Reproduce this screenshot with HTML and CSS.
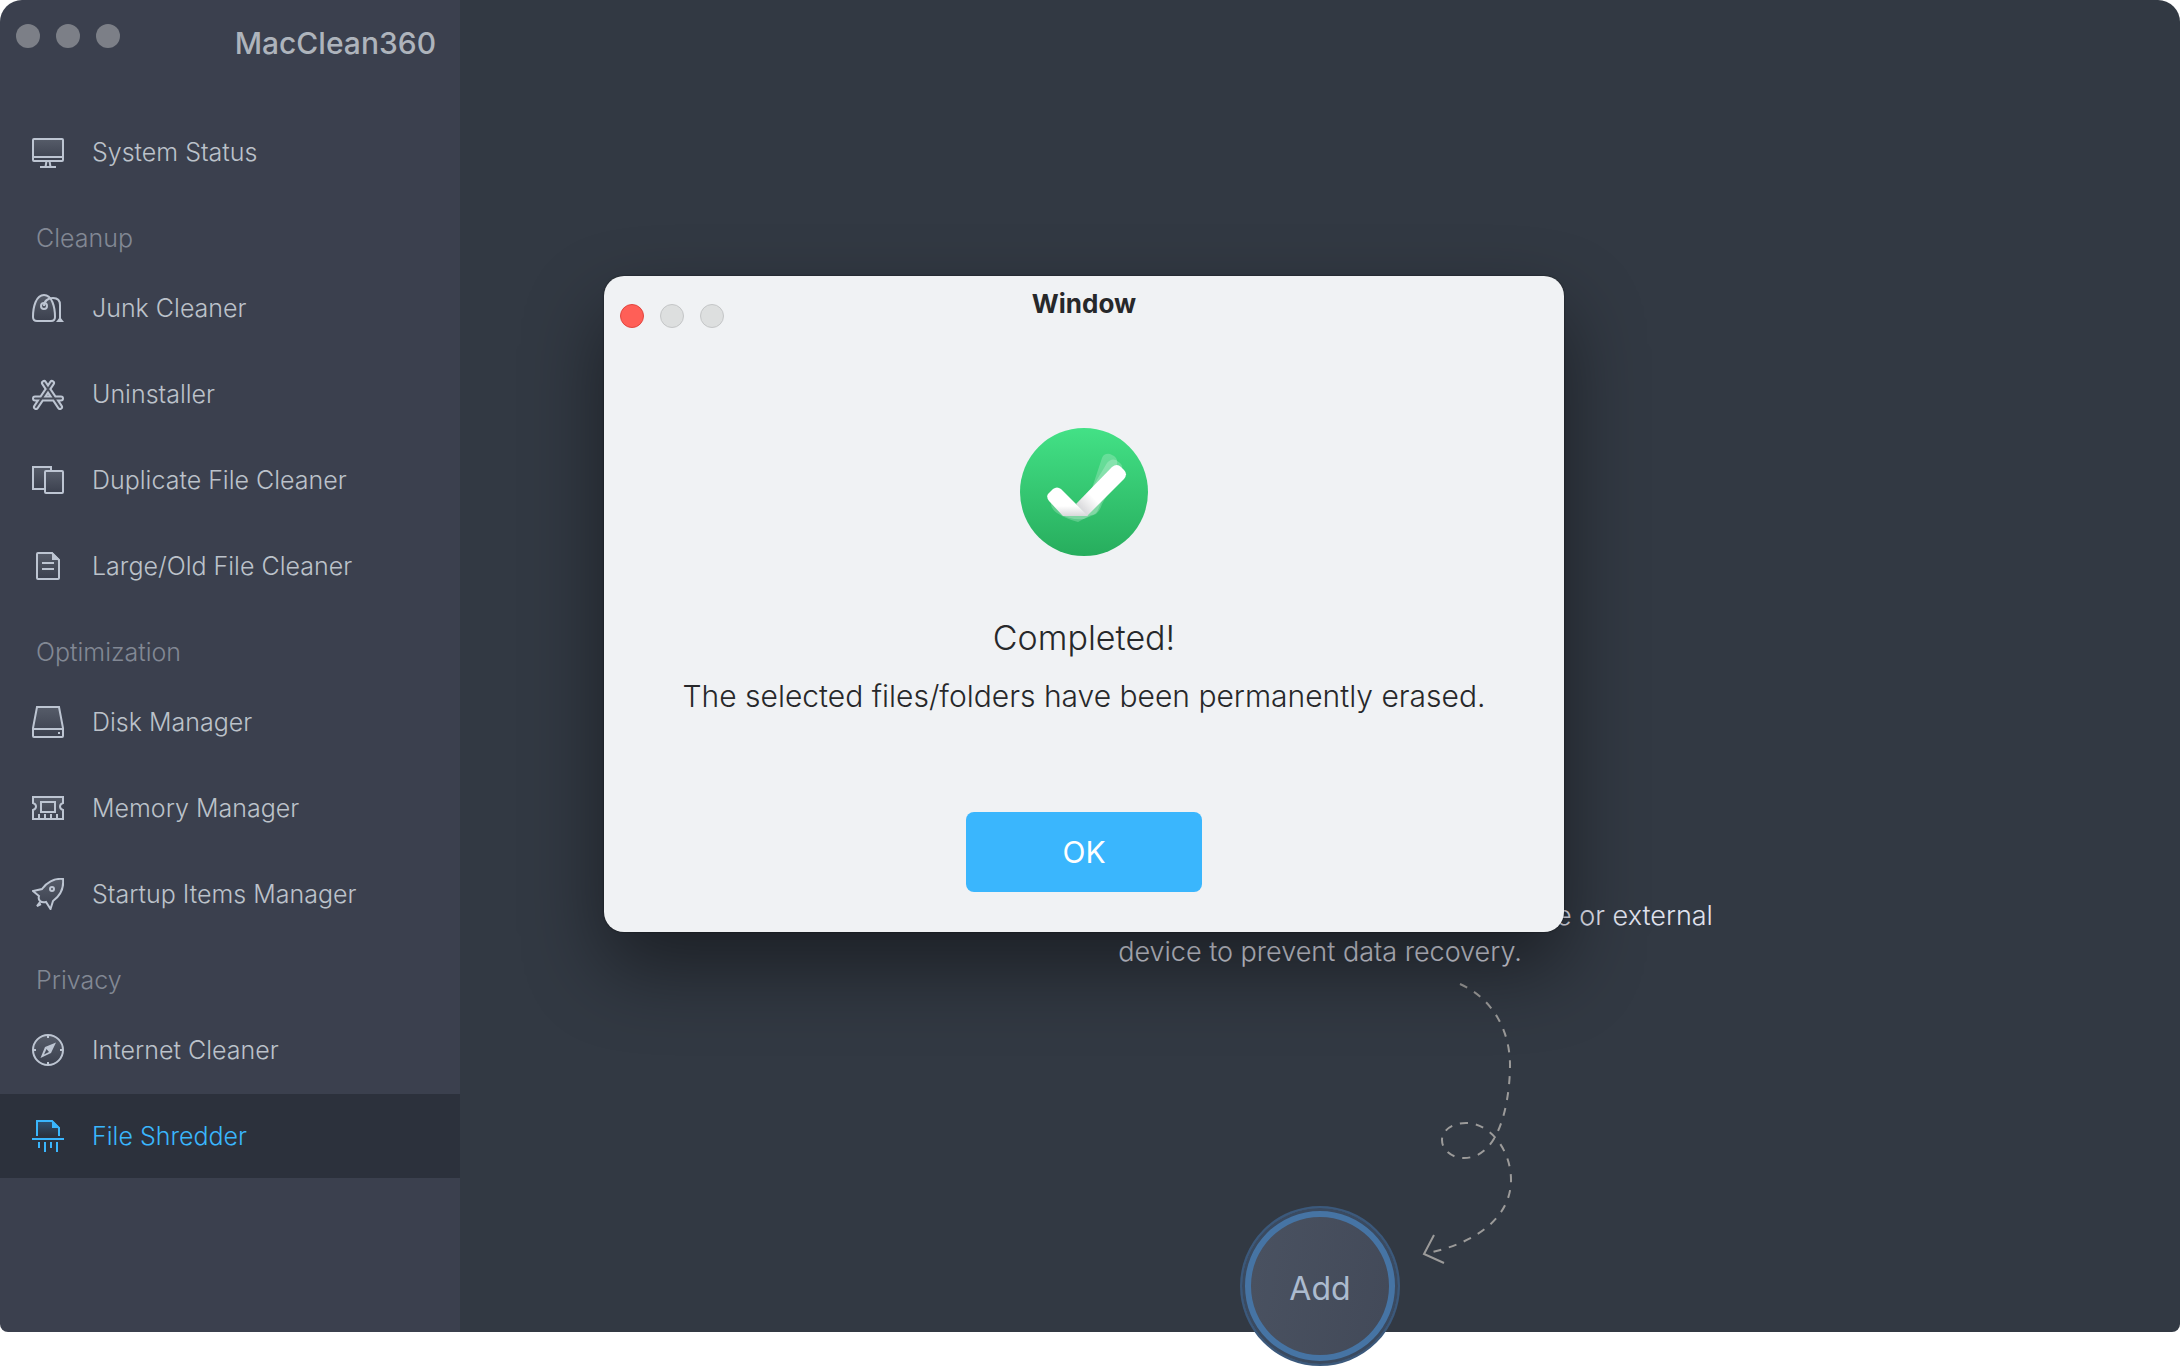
FILE: index.html
```html
<!DOCTYPE html>
<html lang="en">
<head>
  <meta charset="UTF-8">
  <meta name="viewport" content="width=device-width, initial-scale=1">
  <title>MacClean360</title>
  <link rel="stylesheet" href="styles.css">
</head>
<body>
  <div class="app">
    <aside class="sidebar">
      <header class="titlebar">
        <div class="lights">
          <button class="light" aria-label="Close"></button>
          <button class="light" aria-label="Minimize"></button>
          <button class="light" aria-label="Zoom"></button>
        </div>
        <h1>MacClean360</h1>
      </header>

      <!-- shared gradient for the icon bodies -->
      <svg class="defs" aria-hidden="true">
        <defs>
          <linearGradient id="shade" x1="0" y1="0" x2="0" y2="1">
            <stop offset="0" stop-color="#565c69"/>
            <stop offset="1" stop-color="#3b404e"/>
          </linearGradient>
          <linearGradient id="shadeBlue" x1="0" y1="0" x2="0" y2="1">
            <stop offset="0" stop-color="#2e5272"/>
            <stop offset="1" stop-color="#2c313c"/>
          </linearGradient>
        </defs>
      </svg>

      <nav>
        <a class="nav-item" href="#status">
          <svg class="icon" viewBox="0 0 32 32">
            <rect x="1" y="3" width="30" height="22" rx="1" fill="url(#shade)"/>
            <path d="M1 21H31M14.500 25L13.500 31M17.500 25L18.500 31M8 31H24"/>
          </svg>
          System Status
        </a>

        <h2>Cleanup</h2>
        <a class="nav-item" href="#junk">
          <svg class="icon" viewBox="0 0 32 32">
            <path fill="url(#shade)" d="M1 25C1 15 4 3 12 3C20 3 23 15 23 25Q23 29 19 29H5Q1 29 1 25Z"/>
            <circle cx="12" cy="14" r="3"/>
            <path d="M12 14C12 9 16 6 21 6C26 6 28 9 28 13V27"/>
            <path class="solid" d="M28 25L32 30H24Z"/>
          </svg>
          Junk Cleaner
        </a>
        <a class="nav-item" href="#uninstaller">
          <svg class="icon" viewBox="0 0 32 32">
            <path class="stick" d="M3 20.500H29M12 5L28 29M20 5L4 29"/>
            <path class="stick-core" d="M3 20.500H29M12 5L28 29M20 5L4 29"/>
          </svg>
          Uninstaller
        </a>
        <a class="nav-item" href="#duplicates">
          <svg class="icon" viewBox="0 0 32 32">
            <rect x="1" y="3" width="18" height="22" fill="url(#shade)"/>
            <rect x="13" y="7" width="18" height="22" rx="1" fill="url(#shade)"/>
          </svg>
          Duplicate File Cleaner
        </a>
        <a class="nav-item" href="#large">
          <svg class="icon" viewBox="0 0 32 32">
            <path fill="url(#shade)" d="M6 3H20L27 10V28Q27 29 26 29H6Q5 29 5 28V4Q5 3 6 3Z"/>
            <path class="solid" d="M20 2L28 10H20Z"/>
            <path d="M10 13H22M10 19H22"/>
          </svg>
          Large/Old File Cleaner
        </a>

        <h2>Optimization</h2>
        <a class="nav-item" href="#disk">
          <svg class="icon" viewBox="0 0 32 32">
            <path fill="url(#shade)" d="M5 1H27L31 22V30Q31 31 30 31H2Q1 31 1 30V22Z"/>
            <path d="M1 23H31"/>
            <rect class="solid" x="26" y="26" width="2" height="2"/>
          </svg>
          Disk Manager
        </a>
        <a class="nav-item" href="#memory">
          <svg class="icon" viewBox="0 0 32 32">
            <path fill="url(#shade)" d="M1 5H31V11Q28 12 28 14.500T31 18V27H1V18Q4 17 4 14.500T1 11Z"/>
            <rect x="9" y="10" width="14" height="10"/>
            <path d="M7 22V27M13 22V27M19 22V27M25 22V27"/>
          </svg>
          Memory Manager
        </a>
        <a class="nav-item" href="#startup">
          <svg class="icon" viewBox="0 0 32 32">
            <path fill="url(#shade)" d="M31 1C22 0 14 5 10 11L1 13L7 18Q6 21 8 23Q10 25 14 24L18.500 31L21 23C28 18 32 10 31 1Z"/>
            <circle cx="20" cy="11" r="2"/>
            <path d="M8 24L5 28L9 26"/>
          </svg>
          Startup Items Manager
        </a>

        <h2>Privacy</h2>
        <a class="nav-item" href="#internet">
          <svg class="icon" viewBox="0 0 32 32">
            <circle cx="16" cy="16" r="15" fill="url(#shade)"/>
            <path d="M16 1V4M16 28V31M1 16H4M28 16H31"/>
            <path class="solid" fill-rule="evenodd" d="M24 8.500L19 19L8.500 24L13 13ZM14.500 15L12 20.500L17 18Z"/>
          </svg>
          Internet Cleaner
        </a>
        <a class="nav-item active" href="#shredder" aria-current="page">
          <svg class="icon" viewBox="0 0 32 32">
            <path fill="url(#shadeBlue)" stroke="none" d="M5 1H20L27 8V16H5Z"/>
            <path d="M5 16V1H20L27 8V16M0 19H32M7 22V28M13 22V32M19 22V28M25 22V32"/>
            <path class="solid" d="M20 0L28 8H20Z"/>
          </svg>
          File Shredder
        </a>
      </nav>
    </aside>

    <main class="content">
      <p class="description">Completely shred files or folders on your hard drive or external<br>device to prevent data recovery.</p>
      <svg class="arrow" viewBox="0 0 96 286" aria-hidden="true">
        <path stroke-dasharray="8 8" d="M40 4C72 18 90 50 90 85C90 115 82 178 44 178C32 178 22 170 22 160C22 150 33 143 46 143C70 143 91 170 91 200C91 235 60 262 8 273"/>
        <path d="M14 255L4 274L24 283"/>
      </svg>
      <button class="add">Add</button>
    </main>

    <div class="overlay">
      <section class="dialog" role="dialog" aria-labelledby="dialog-title">
        <header class="dialog-bar">
          <div class="lights">
            <button class="light close" aria-label="Close"></button>
            <button class="light off" aria-label="Minimize" disabled></button>
            <button class="light off" aria-label="Zoom" disabled></button>
          </div>
          <h2 id="dialog-title">Window</h2>
        </header>
        <svg class="check" viewBox="0 0 128 128" aria-hidden="true">
          <defs>
            <linearGradient id="green" x1="0" y1="0" x2="0" y2="1">
              <stop offset="0" stop-color="#43e186"/>
              <stop offset="1" stop-color="#27ad5d"/>
            </linearGradient>
            <linearGradient id="longArm" gradientUnits="userSpaceOnUse" x1="60" y1="84" x2="74" y2="70">
              <stop offset="0" stop-color="#d3d3d6"/>
              <stop offset="1" stop-color="#fff"/>
            </linearGradient>
            <linearGradient id="shortArm" gradientUnits="userSpaceOnUse" x1="0" y1="78" x2="0" y2="88">
              <stop offset="0" stop-color="#fff"/>
              <stop offset="1" stop-color="#d8d8da"/>
            </linearGradient>
          </defs>
          <circle cx="64" cy="64" r="64" fill="url(#green)"/>
          <g fill="#fff" fill-opacity=".22">
            <path d="M72 60L82 30Q84 25 90 26L94 28Q98 31 97 36L78 82Q76 87 71 87L58 94Q46 91 37 85Q30 80 31 74L56 78Z"/>
            <path d="M72 60L87 35Q91 30 96 32L100 35Q104 38 101 43L82 76Q80 83 76 86L64 91Q50 92 42 87L34 76L56 78Z"/>
          </g>
          <path fill="url(#longArm)" d="M56 76L92 39Q97 35 101 39L104 42Q108 46 104 51L67 88Z"/>
          <path fill="url(#shortArm)" d="M28 66L33 61Q37 58 41 61L68 88H43L29 73Q26 69 28 66Z"/>
        </svg>
        <h3>Completed!</h3>
        <p>The selected files/folders have been permanently erased.</p>
        <button class="ok">OK</button>
      </section>
    </div>
  </div>
</body>
</html>
```

FILE: styles.css
```css
* {
  box-sizing: border-box;
}
body {
  margin: 0;
  min-height: 100vh;
  background: #fff;
  font-family: Inter, "Liberation Sans", sans-serif;
  font-weight: 300;
}
h1, h2, h3, p {
  margin: 0;
}
button {
  padding: 0;
  border: none;
  font-family: inherit;
  cursor: pointer;
}

/* the Add button hangs below the window, the 34px leave room for it */
.app {
  position: relative;
  display: flex;
  min-height: calc(100vh - 34px);
}

/* sidebar */
.sidebar {
  width: 460px;
  flex-shrink: 0;
  background: #3b404e;
  border-radius: 22px 0 0 8px;
}
.titlebar {
  display: flex;
  justify-content: space-between;
  height: 110px;
  padding: 24px 24px 0 16px;
}
.titlebar h1 {
  font-size: 30px;
  font-weight: 500;
  line-height: 38px;
  color: #aeb4bc;
}
.lights {
  display: flex;
  gap: 16px;
}
.light {
  width: 24px;
  height: 24px;
  border-radius: 50%;
  background: #7c7f87;
}
.defs {
  position: absolute;
  width: 0;
  height: 0;
}
.sidebar h2 {
  height: 72px;
  padding: 28px 36px 0;
  font-size: 25px;
  font-weight: 300;
  line-height: 32px;
  color: #828894;
}
.nav-item {
  display: flex;
  align-items: center;
  gap: 28px;
  height: 84px;
  padding: 0 32px;
  font-size: 25px;
  color: #bcc2ca;
  text-decoration: none;
}
.nav-item + .nav-item {
  margin-top: 2px;
}
.nav-item.active {
  background: #2c313c;
  color: #3ab6fd;
}
.icon {
  width: 32px;
  height: 32px;
  flex-shrink: 0;
  fill: none;
  stroke: #bdc5d2;
  stroke-width: 2;
}
.icon .solid {
  fill: #bdc5d2;
  stroke: none;
}
.icon .stick {
  stroke-width: 6;
  stroke-linecap: round;
}
.icon .stick-core {
  stroke: #474c59;
  stroke-width: 2;
  stroke-linecap: round;
}
.active .icon {
  stroke: #3ab6fd;
}
.active .icon .solid {
  fill: #3ab6fd;
}

/* main area */
.content {
  flex: 1;
  display: flex;
  flex-direction: column;
  justify-content: flex-end;
  align-items: center;
  background: #323943;
  border-radius: 0 22px 8px 0;
}
.description {
  font-size: 27px;
  line-height: 36px;
  color: #e0e2ee;
  text-align: center;
}
.arrow {
  width: 96px;
  height: 286px;
  margin: 10px 0 -60px 296px;
  fill: none;
  stroke: #9c9b9a;
  stroke-width: 2;
}
.add {
  width: 160px;
  height: 160px;
  margin-bottom: -34px;
  padding-top: 4px;
  border: 2px solid #3b597c;
  border-radius: 50%;
  background: linear-gradient(100deg, #4a5261, #424958);
  box-shadow: inset 0 0 0 3px #3a4a60, inset 0 0 0 9px #4674a4;
  font-size: 32px;
  font-weight: 400;
  color: #acbbcf;
}

/* dialog */
.overlay {
  position: absolute;
  inset: 0;
  display: flex;
  justify-content: center;
  align-items: center;
  padding: 0 12px 124px 0;
}
.dialog {
  display: flex;
  flex-direction: column;
  align-items: center;
  width: 960px;
  padding-bottom: 40px;
  border-radius: 20px;
  background: #f0f2f4;
  box-shadow: 0 0 2px rgba(0, 0, 0, 0.6), 0 36px 80px rgba(0, 0, 0, 0.45);
  color: #27282a;
}
.dialog-bar {
  display: grid;
  grid-template-columns: 1fr auto 1fr;
  width: 100%;
  height: 152px;
  padding: 12px 16px 0;
}
.dialog-bar .lights {
  padding-top: 16px;
}
.dialog-bar h2 {
  font-size: 26px;
  font-weight: 700;
  line-height: 32px;
}
.light.close {
  background: #ff5f57;
  border: 1px solid #e2463f;
}
.light.off {
  background: #dddfdf;
  border: 1px solid #c4c6c7;
}
.check {
  width: 128px;
  height: 128px;
}
.dialog h3 {
  margin-top: 60px;
  font-size: 34px;
  font-weight: 300;
  line-height: 44px;
}
.dialog p {
  margin-top: 16px;
  font-size: 30px;
  line-height: 40px;
}
.ok {
  width: 236px;
  height: 80px;
  margin-top: 96px;
  border-radius: 8px;
  background: #3ab6fd;
  font-size: 30px;
  font-weight: 400;
  color: #fff;
}
```
